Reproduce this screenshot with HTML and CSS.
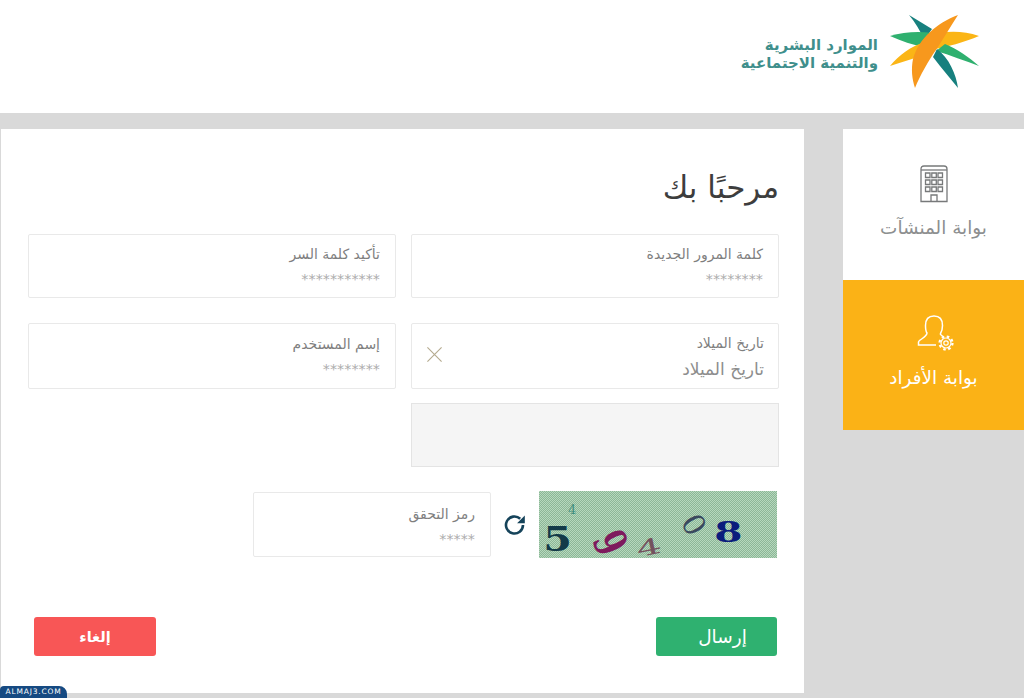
FILE: index.html
```html
<!DOCTYPE html>
<html lang="ar" dir="rtl">
<head>
<meta charset="utf-8">
<title>مرحبًا بك</title>
<link rel="stylesheet" href="styles.css">
</head>
<body>
<header class="topbar">
  <div class="logo">
    <svg class="logo-mark" viewBox="0 0 92 76" width="92" height="76" aria-hidden="true">
      <path fill="#17807e" d="M20 1 L43 15 L35 26 C31 16 26 8 20 1Z"/>
      <path fill="#2fb06f" d="M1 22 C14 18 30 17 43 19 L36 33 C24 31 12 27 1 22Z"/>
      <path fill="#fbb516" d="M90 22 C76 17 62 17 49 19 L41 36 C58 33 76 28 90 22Z"/>
      <path fill="#fbb516" d="M1 52 C10 41 22 32 36 28 L29 43 C20 46 10 49 1 52Z"/>
      <path fill="#2fb06f" d="M90 52 C80 43 68 35 56 30 L47 37 C61 41 76 47 90 52Z"/>
      <path fill="#17807e" d="M69 74 C67 60 60 44 48 35 L44 43 L51 52 C57 59 63 67 69 74Z"/>
      <path fill="#f7981d" d="M69 1 C48 9 30 24 24 45 C22 55 23 65 26 74 C31 62 39 47 47 36 C54 25 62 12 69 1Z"/>
    </svg>
    <div class="logo-text">
      <span>الموارد البشرية</span>
      <span>والتنمية الاجتماعية</span>
    </div>
  </div>
</header>

<main class="stage">
  <nav class="portals">
    <a class="portal">
      <svg viewBox="0 0 30 38" width="30" height="38" fill="none" stroke="#77797a" stroke-width="1.3" aria-hidden="true">
        <path d="M2 36.500V4q0-3 3-3h20q3 0 3 3v32.500Z"/>
        <path d="M2 5h26"/>
        <path d="M6.500 8h4.500v4.500H6.500ZM12.800 8h4.500v4.500h-4.500ZM19 8h4.500v4.500H19ZM6.500 15h4.500v4.500H6.500ZM12.800 15h4.500v4.500h-4.500ZM19 15h4.500v4.500H19ZM6.500 22h4.500v4.500H6.500ZM12.800 22h4.500v4.500h-4.500ZM19 22h4.500v4.500H19Z"/>
        <path d="M12 36.500v-6.500h6v6.500"/>
      </svg>
      <span>بوابة المنشآت</span>
    </a>
    <a class="portal portal-active">
      <svg viewBox="0 0 40 38" width="40" height="38" fill="none" stroke="#fff" stroke-width="1.500" aria-hidden="true">
        <path d="M22 30H4.500v-3c0-2 8.500-5 8.500-9c-1.500-2-1.500-5-1.500-7.500C11.500 4 15 1 20 1s8.500 3 8.500 9.500c0 3-.5 5.500-2 8v1l3 2.500"/>
        <circle cx="32" cy="28" r="2.200" stroke-width="1.200"/>
        <circle cx="32" cy="28" r="5" stroke-width="1.200"/>
        <circle cx="32" cy="28" r="6.500" stroke-width="2.200" stroke-dasharray="2.550 2.550"/>
      </svg>
      <span>بوابة الأفراد</span>
    </a>
  </nav>

  <section class="card">
    <h1 class="title">مرحبًا بك</h1>
    <div class="form-grid">
      <div class="field">
        <label>كلمة المرور الجديدة</label>
        <span class="mask">********</span>
      </div>
      <div class="field">
        <label>تأكيد كلمة السر</label>
        <span class="mask">***********</span>
      </div>
      <div class="field field-date">
        <div class="date-main">
          <label>تاريخ الميلاد</label>
          <span class="date-value">تاريخ الميلاد</span>
        </div>
        <svg class="clear" viewBox="0 0 18 18" width="17" height="17" fill="none" stroke="#b5ab8f" stroke-width="1.200" aria-hidden="true">
          <path d="M1.500 1.500l15 15M16.500 1.500l-15 15"/>
        </svg>
      </div>
      <div class="field">
        <label>إسم المستخدم</label>
        <span class="mask">********</span>
      </div>
      <div class="blank-box"></div>
    </div>

    <div class="captcha-row">
      <div class="captcha">
        <span class="digit d-tiny">4</span>
        <span class="digit d-five">5</span>
        <span class="digit d-nine">9</span>
        <span class="digit d-four">4</span>
        <span class="digit d-zero">0</span>
        <span class="digit d-eight">8</span>
      </div>
      <svg class="refresh" viewBox="0 0 24 24" width="24" height="24" fill="none" aria-hidden="true">
        <path d="M20 12a8.500 8.500 0 1 1-2.800-6.300" stroke="#15435a" stroke-width="2.600"/>
        <path d="M21.800 2.500v7.700h-7.700Z" fill="#15435a"/>
      </svg>
      <div class="field field-code">
        <label>رمز التحقق</label>
        <span class="mask">*****</span>
      </div>
    </div>

    <div class="actions">
      <button class="btn btn-send" type="button">إرسال</button>
      <button class="btn btn-cancel" type="button">إلغاء</button>
    </div>
  </section>
</main>
<div class="watermark">ALMAJ3.COM</div>
</body>
</html>
```

FILE: styles.css
```css
* { box-sizing: border-box; }
html, body { height: 100%; }
body {
  margin: 0;
  width: 1024px;
  height: 698px;
  overflow: hidden;
  position: relative;
  background: #d9d9d9;
  font-family: "DejaVu Sans", sans-serif;
  color: #7d7d7d;
}
.topbar {
  height: 113px;
  background: #fff;
  display: flex;
  padding: 14px 43px 0 0;
}
.logo { display: flex; align-items: flex-start; gap: 11px; }
.logo-mark { flex: none; }
.logo-text {
  display: flex;
  flex-direction: column;
  margin-top: 22px;
  font-size: 15px;
  line-height: 18px;
  font-weight: 700;
  color: #3f8f8c;
  white-space: nowrap;
}
.stage {
  display: flex;
  padding: 16px 0 0 1px;
  gap: 39px;
}
.portals { width: 181px; flex: none; display: flex; flex-direction: column; }
.portal {
  height: 151px;
  background: #fff;
  color: #8d8f90;
  display: flex;
  flex-direction: column;
  align-items: center;
  padding-top: 36px;
  gap: 13px;
  font-size: 18.400px;
  line-height: 24px;
}
.portal-active {
  height: 150px;
  background: #fbb216;
  color: #fff;
  padding-top: 35px;
}
.card {
  width: 803px;
  height: 564px;
  background: #fff;
  padding: 38px 25px 0 27px;
}
.title {
  margin: 0 0 27px;
  font-size: 31px;
  line-height: 40px;
  font-weight: 400;
  color: #3d3d3d;
}
.form-grid {
  display: grid;
  grid-template-columns: 368px 368px;
  column-gap: 15px;
  grid-template-rows: 64px 66px 65px;
  row-gap: 25px;
}
.field {
  border: 1px solid #e9e9e9;
  border-radius: 2px;
  padding: 0 15px;
  display: flex;
  flex-direction: column;
  justify-content: center;
  background: #fff;
}
.field label {
  font-size: 14px;
  line-height: 22px;
  color: #7f7f7f;
}
.mask {
  font-size: 14.300px;
  line-height: 22px;
  margin-top: 3px;
  color: #adadad;
}
.field-date {
  flex-direction: row;
  justify-content: space-between;
  align-items: center;
  padding: 0 14px;
}
.date-main { display: flex; flex-direction: column; }
.date-value { font-size: 17px; line-height: 24px; margin-top: 3px; color: #8d8d8d; }
.clear { margin-bottom: 3px; }
.blank-box {
  grid-column: 1;
  margin-top: -11px;
  height: 64px;
  background: #f5f5f5;
  border: 1px solid #e4e4e4;
}
.captcha-row {
  display: flex;
  align-items: center;
  margin-top: 12px;
  padding-right: 2px;
  height: 67px;
}
.captcha {
  position: relative;
  width: 238px;
  height: 67px;
  flex: none;
  font-family: "DejaVu Serif", serif;
  font-weight: 700;
  background: repeating-conic-gradient(#8cb697 0 25%, #b6d8bd 0 50%) 0 0 / 2px 2px;
}
.digit { position: absolute; line-height: 1; direction: ltr; }
.d-tiny { left: 29px; top: 12px; font-size: 13px; color: #3f8f80; font-weight: 400; }
.d-five { left: 7px; top: 32px; font-size: 33px; color: #123a48; transform: scaleX(1.250); }
.d-nine { left: 60px; top: 43px; font-size: 30px; line-height: 18px; color: #7e1a5d; transform: rotate(65deg) scaleY(1.500); }
.d-four { left: 103px; top: 50px; font-size: 22px; line-height: 14px; color: #74525e; font-weight: 400; transform: rotate(-12deg) scaleX(1.800); }
.d-zero { left: 145px; top: 19px; font-size: 30px; color: #3a4a5e; font-weight: 400; transform: rotate(60deg); }
.d-eight { left: 180px; top: 28px; font-size: 27px; color: #0b1d7c; transform: scaleX(1.500); }
.refresh { flex: none; margin: 0 12px 0 12px; }
.field-code {
  width: 238px;
  height: 65px;
  justify-content: flex-start;
  padding-top: 10px;
}
.actions {
  display: flex;
  justify-content: space-between;
  margin-top: 59px;
  padding: 0 2px 0 6px;
}
.btn {
  width: 122px;
  height: 39px;
  border: 0;
  border-radius: 3px;
  color: #fff;
  font-family: inherit;
  font-size: 14.500px;
  font-weight: 700;
}
.btn-send { background: #2fb170; width: 121px; font-size: 18.500px; font-weight: 400; padding: 0 0 0 12px; }
.btn-cancel { background: #f85656; }
.watermark {
  position: absolute;
  left: 0;
  bottom: 0;
  width: 67px;
  height: 12px;
  background: #164a82;
  border-top-right-radius: 8px;
  border-top-left-radius: 4px;
  color: #fff;
  font-size: 7.500px;
  line-height: 12px;
  letter-spacing: .8px;
  text-align: center;
  direction: ltr;
}
```
